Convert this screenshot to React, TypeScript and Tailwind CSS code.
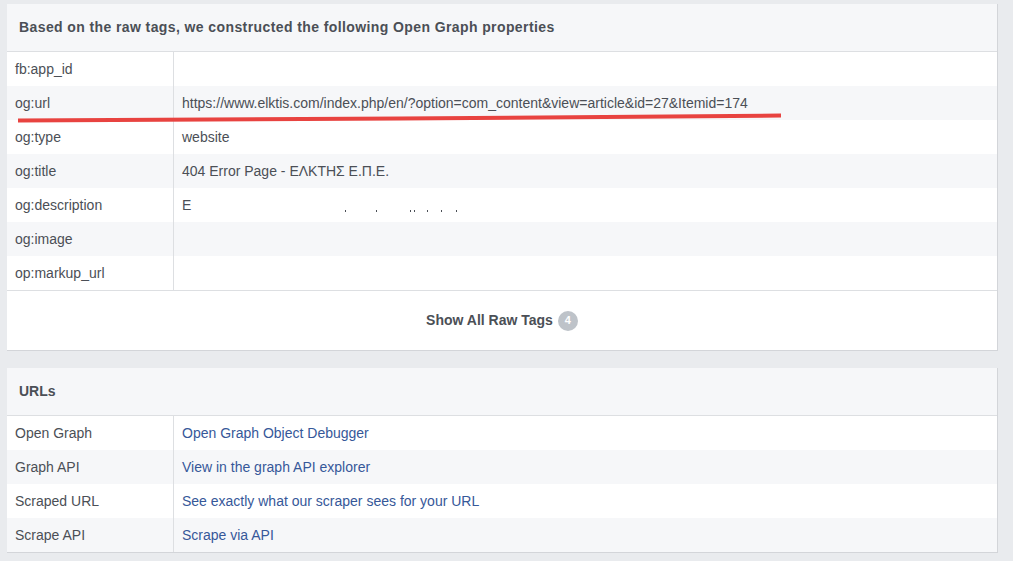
import React from "react";

const font = { fontFamily: "Helvetica, Arial, 'Liberation Sans', sans-serif" };

function Row({ label, value, grey, link }: { label: string; value?: React.ReactNode; grey?: boolean; link?: boolean }) {
  return (
    <div className={`flex h-[34px] ${grey ? "bg-[#f6f7f9]" : "bg-white"}`}>
      <div className="w-[167px] shrink-0 border-r border-[#dddfe2] pl-[8px] flex items-center text-[14px] text-[#4b4f56]">{label}</div>
      <div className={`pl-[8px] flex items-center text-[14px] ${link ? "text-[#365899]" : "text-[#4b4f56]"}`}>{value}</div>
    </div>
  );
}

const dots = [163, 194, 228, 232, 245, 259, 274];

export default function App() {
  return (
    <div className="relative w-[1013px] h-[561px] bg-[#e9ebee] overflow-hidden" style={font}>
      <div className="pt-[4px] pl-[7px] w-[998px] flex flex-col gap-[17px]">
        <div className="bg-white border-r border-b border-[#d3d5d9]">
          <div className="h-[48px] bg-[#f6f7f9] border-b border-[#dddfe2] flex items-center pl-[12px] text-[14px] font-bold tracking-[0.4px] text-[#4b4f56]">
            Based on the raw tags, we constructed the following Open Graph properties
          </div>
          <Row label="fb:app_id" />
          <Row label="og:url" grey value="https://www.elktis.com/index.php/en/?option=com_content&view=article&id=27&Itemid=174" />
          <Row label="og:type" value="website" />
          <Row label="og:title" grey value="404 Error Page - ΕΛΚΤΗΣ Ε.Π.Ε." />
          <Row
            label="og:description"
            value={
              <span className="relative flex items-center w-[300px] h-full">
                <span>E</span>
                {dots.map((x, i) => (
                  <span key={i} className="absolute top-[22px] w-[1px] h-[2px] bg-[#4b4f56]" style={{ left: x }} />
                ))}
              </span>
            }
          />
          <Row label="og:image" grey />
          <Row label="op:markup_url" />
          <div className="h-[60px] border-t border-[#dddfe2] flex items-center justify-center gap-[5px]">
            <span className="text-[14px] font-bold text-[#4b4f56]">Show All Raw Tags</span>
            <span className="w-[20px] h-[20px] rounded-full bg-[#bec3c9] text-white text-[11px] font-bold flex items-center justify-center">4</span>
          </div>
        </div>
        <div className="bg-white border-r border-b border-[#d3d5d9]">
          <div className="h-[48px] bg-[#f6f7f9] border-b border-[#dddfe2] flex items-center pl-[12px] text-[14px] font-bold text-[#4b4f56]">
            URLs
          </div>
          <Row label="Open Graph" link value="Open Graph Object Debugger" />
          <Row label="Graph API" grey link value="View in the graph API explorer" />
          <Row label="Scraped URL" link value="See exactly what our scraper sees for your URL" />
          <Row label="Scrape API" grey link value="Scrape via API" />
        </div>
      </div>
      <svg className="absolute left-0 top-0 pointer-events-none" width="1013" height="561">
        <path d="M18 120.5 L400 118.5 L781 115.5" stroke="#e84340" strokeWidth="4" fill="none" />
      </svg>
    </div>
  );
}
